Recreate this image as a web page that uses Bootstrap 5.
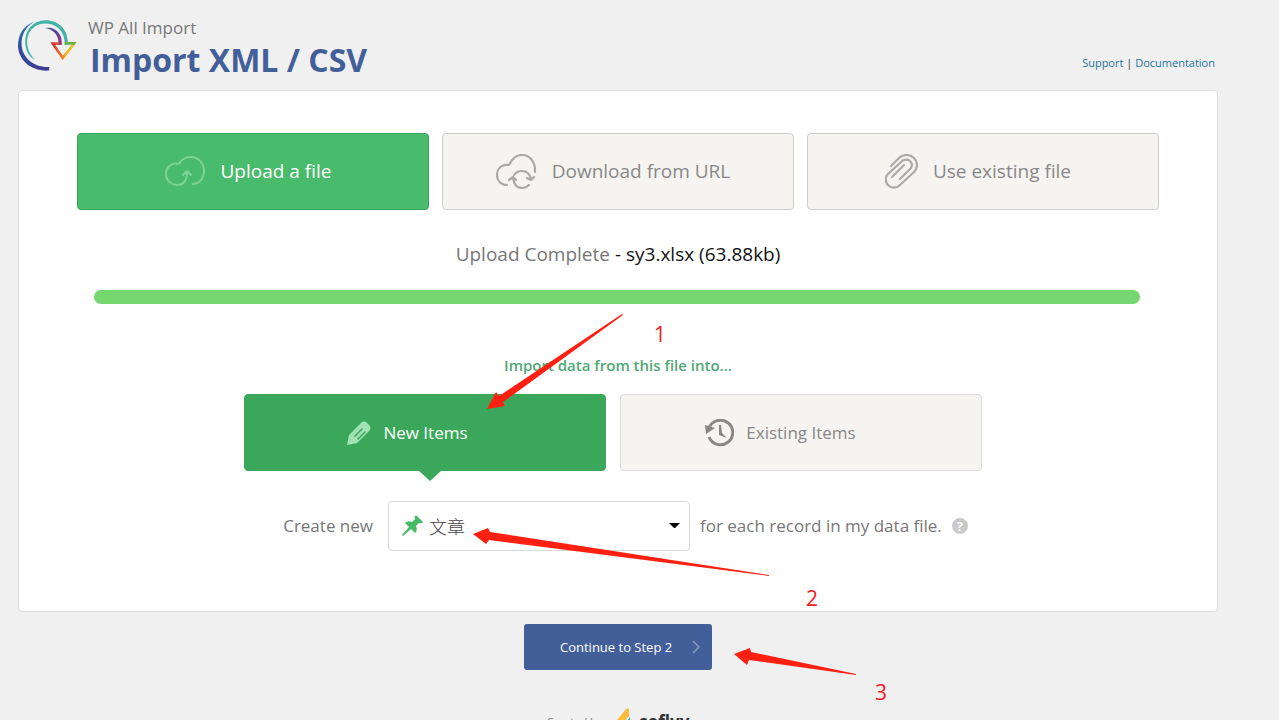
<!DOCTYPE html>
<html lang="en">
<head>
<meta charset="utf-8">
<meta name="viewport" content="width=device-width, initial-scale=1">
<title>WP All Import</title>
<link href="https://cdn.jsdelivr.net/npm/bootstrap@5.3.0/dist/css/bootstrap.min.css" rel="stylesheet">
<style>
html{scrollbar-width:none}
body{background:#f0f0f0;font-family:"Open Sans","Noto Sans CJK SC",sans-serif;color:#777;line-height:24px;font-size:17px}
.page{padding:16px 61px 0 18px}
.logo{margin-top:3px}
.brand-name{font-size:17px;line-height:24px}
.page-title{font-size:32px;line-height:40px;font-weight:700;color:#435f9a;margin:0 0 0 2px}
.brand-text{padding-left:11px}
.top-links{font-size:11px;line-height:16px;color:#333;padding:0 3px 9px 0}
.top-links a{color:#21759b;text-decoration:none}
.panel{background:#fff;border:1px solid #dedede;border-radius:4px;margin-top:10px;padding:42px 58px 60px}
.sources{gap:13px}
.choice{height:77px;border:1px solid #ccc;border-radius:4px;background:#f5f4f1;color:#888;display:flex;align-items:center;justify-content:center;flex:1 1 0;padding:0;position:relative}
.sources .choice{font-size:19px;gap:15px;padding:0 10px 1px 0}
.sources .choice.current{background:#49bb6c;border-color:#3ba45b;color:#fff}
.targets{grid-template-columns:1fr 1fr;gap:14px;padding:0 177px 0 167px;margin-top:17px}
.targets .choice{font-size:17px;gap:12px;border-color:#dcdcdc;padding-right:41px}
.targets .choice.current{background:#3aa75a;border-color:#3aa75a;color:#fff;padding-right:35px}
.choice.current.pointed::after{content:"";position:absolute;top:100%;left:50%;margin-left:-7px;border:12px solid transparent;border-top:11px solid #3aa75a;border-bottom:0}
.status{font-size:19px;line-height:28px;margin-top:30px}
.status b{font-weight:400;color:#111}
.bar{height:14px;border-radius:7px;background:#eee;margin:22px 19px 0 17px}
.bar .progress-bar{background:#76d771}
.into{font-size:15px;line-height:24px;font-weight:600;color:#4fa873;margin:49px 0 0}
.record{margin-top:30px;padding-left:15px;gap:10px}
.record label{margin-right:5px}
.picker{width:302px}
.picker select{height:50px;width:100%;border:1px solid #d5dad8;border-radius:4px;background:#fff;color:#444;font-size:18px;font-weight:300;padding:2px 40px 0;appearance:none}
.picker svg{position:absolute;pointer-events:none}
.picker .pin{left:14px;top:14px}
.picker .caret{right:10px;top:22px}
.help{width:16px;height:16px;border-radius:50%;border:0;padding:0;background:#c9c9c9;color:#fff;font-size:13px;line-height:16px;font-weight:700}
.next{width:188px;height:46px;border:0;border-radius:3px;background:#435f9a;color:#fff;font-size:13px;margin-top:12px;padding:0 12px 0 36px}
.maker{font-size:11px;line-height:28px;margin-top:37px;gap:12px;color:#777}
.maker strong{color:#333;font-size:17px;margin-left:-5px}
.notes{pointer-events:none;top:0}
.notes text{font-size:21px;fill:#ee1c25}
</style>
</head>
<body>
<div class="page position-relative">
  <header class="d-flex justify-content-between align-items-end">
    <div class="d-flex align-items-start">
      <svg class="logo" width="59" height="53" viewBox="23 28 178 159" aria-hidden="true">
        <defs>
          <linearGradient id="blue" x1="0" y1="0" x2="0" y2="1"><stop offset="0" stop-color="#2a7cae"/><stop offset=".5" stop-color="#3450a0"/><stop offset="1" stop-color="#3b3d90"/></linearGradient>
          <linearGradient id="violet" x1="0" y1="0" x2="1" y2="1"><stop offset="0" stop-color="#4051a0"/><stop offset=".6" stop-color="#693d93"/><stop offset="1" stop-color="#a33874"/></linearGradient>
          <linearGradient id="head" x1="0" y1="0" x2="1" y2="0"><stop offset="0" stop-color="#cf3340"/><stop offset=".4" stop-color="#ed7427"/><stop offset=".65" stop-color="#f5bd22"/><stop offset="1" stop-color="#d8c530"/></linearGradient>
        </defs>
        <path fill="url(#blue)" d="M75 34C35 48 23 78 23 110C25 152 62 187 117 183V172C72 174 38 146 34 108C32 76 45 49 75 34Z"/>
        <path fill="none" stroke="url(#head)" stroke-width="8" d="M154 102H128L158 145L193 101"/>
        <path fill="#41b2a7" d="M74 150C30 128 32 35 105 31C145 31 173 58 173 97V105H164V97C162 63 138 41 106 41C46 42 34 110 74 150Z"/>
        <path fill="#69b445" d="M173 97H200L194 105H164V97Z"/>
        <path fill="url(#violet)" d="M104 55C133 48 155 70 155 97V105H145V96C144 75 128 58 104 55Z"/>
      </svg>
      <div class="brand-text">
        <div class="brand-name">WP All Import</div>
        <h1 class="page-title">Import XML / CSV</h1>
      </div>
    </div>
    <nav class="top-links"><a href="#">Support</a> | <a href="#">Documentation</a></nav>
  </header>

  <main>
    <section class="panel">
      <div class="sources d-flex">
        <button type="button" class="choice current">
          <svg width="41" height="32" viewBox="0 0 41 32" fill="none" stroke="#7bd394" stroke-width="2" stroke-linecap="round" stroke-linejoin="round"><path d="M28 29C35 28 39 23 39 16C39 8 33 2 26 2C20 2 16 5 14 9C7 7 1 12 1 19C1 26 7 30 12 30C18 30 22 26 22 17M18 20L22 16L26 20"/></svg>
          <span>Upload a file</span>
        </button>
        <button type="button" class="choice">
          <svg width="41" height="35" viewBox="0 0 41 35" fill="none" stroke="#aaa" stroke-width="2.2" stroke-linecap="round" stroke-linejoin="round"><path d="M11 31C5 31 1 27 1 21C1 14 6 10 13 11C16 5 20 1 26 1C34 1 39 8 39 16V18M18 21C20 18 23 17 26 17C31 17 34 20 35 26M35 26L31 24M35 26L38 23M13 26L17 23L20 26M17 24C18 31 21 34 26 34C29 34 31 33 33 31"/></svg>
          <span>Download from URL</span>
        </button>
        <button type="button" class="choice">
          <svg width="33" height="35" viewBox="0 0 33 35" fill="none" stroke="#aaa" stroke-width="2.2" stroke-linecap="round"><path d="M6 12L14 4C18 0 25 0 29 4C33 8 33 14 29 18L15 31C11 35 6 34 3 31C0 28 0 23 3 20L16 8C19 5 23 5 25 7C28 10 27 13 25 15L15 25M7 23L19 11"/></svg>
          <span>Use existing file</span>
        </button>
      </div>

      <p class="status text-center mb-0">Upload Complete <b>- sy3.xlsx (63.88kb)</b></p>
      <div class="progress bar" role="progressbar" aria-label="Upload" aria-valuenow="100" aria-valuemin="0" aria-valuemax="100"><div class="progress-bar w-100"></div></div>

      <h2 class="into text-center">Import data from this file into...</h2>
      <div class="targets d-grid">
        <button type="button" class="choice current pointed">
          <svg width="24" height="24" viewBox="0 0 24 24" fill="#a0e2b3"><path fill-rule="evenodd" d="M0 24L2 14L15 1Q17 0 19 1L23 5Q24 7 23 9L10 22ZM7 15L8 16L16 8L15 7ZM10 18L11 19L19 11L18 10Z"/></svg>
          <span>New Items</span>
        </button>
        <button type="button" class="choice">
          <svg width="29" height="28" viewBox="0 0 29 28"><path fill="none" stroke="#888" stroke-width="3" d="M4 9A12.300 12.300 0 1 1 4 18"/><path fill="#888" d="M0 6L10 9L1 15ZM14 6H16L17 14L22 19L14 16Z"/></svg>
          <span>Existing Items</span>
        </button>
      </div>

      <div class="record d-flex align-items-center justify-content-center">
        <label for="type">Create new</label>
        <div class="picker position-relative">
          <select id="type"><option>文章</option></select>
          <svg class="pin" width="22" height="22" viewBox="0 0 22 22" fill="#46ba69"><path d="M13 1Q14 0 15 1L21 7Q20 9 17 8L14 11Q16 15 13 18L9 14L1 21L0 20L7 12L3 8Q6 5 10 7L13 4Q12 2 13 1Z"/></svg>
          <svg class="caret" width="11" height="6" viewBox="0 0 11 6"><path d="M0 0H11L6 5H5Z" fill="#000"/></svg>
        </div>
        <span>for each record in my data file.</span>
        <button type="button" class="help" aria-label="Help">?</button>
      </div>
    </section>

    <div class="text-center">
      <button type="submit" class="next d-inline-flex align-items-center justify-content-between">
        <span>Continue to Step 2</span>
        <svg width="8" height="14" viewBox="0 0 8 14" fill="none" stroke="#8497c0" stroke-width="1.500"><path d="M1 1L7 7L1 13"/></svg>
      </button>
    </div>
  </main>

  <footer class="maker d-flex justify-content-center align-items-center">
    <span>Created by</span>
    <svg width="18" height="30" viewBox="0 0 18 30"><path fill="#fdbb3c" d="M0 17L12 2Q15 0 15 3V9L7 18Z"/><path fill="#27b59b" d="M13 14L16 10V18L8 28Z"/></svg>
    <strong>soflyy</strong>
  </footer>

  <svg class="notes position-absolute start-50 translate-middle-x" width="720" height="720" viewBox="280 0 720 720" fill="#ff2012" aria-hidden="true">
    <path d="M487 409L496 392L499 396L622 314L623 315L503 402L505 406Z"/>
    <path d="M473 534L488 528L490 532L769 575V576L489 540L486 544Z"/>
    <path d="M734 654L750 648L751 652L856 674V675L749 660L747 665Z"/>
    <text x="654" y="342">1</text><text x="806" y="606">2</text><text x="875" y="700">3</text>
  </svg>
</div>
<script src="https://cdn.jsdelivr.net/npm/bootstrap@5.3.0/dist/js/bootstrap.bundle.min.js"></script>
</body>
</html>
